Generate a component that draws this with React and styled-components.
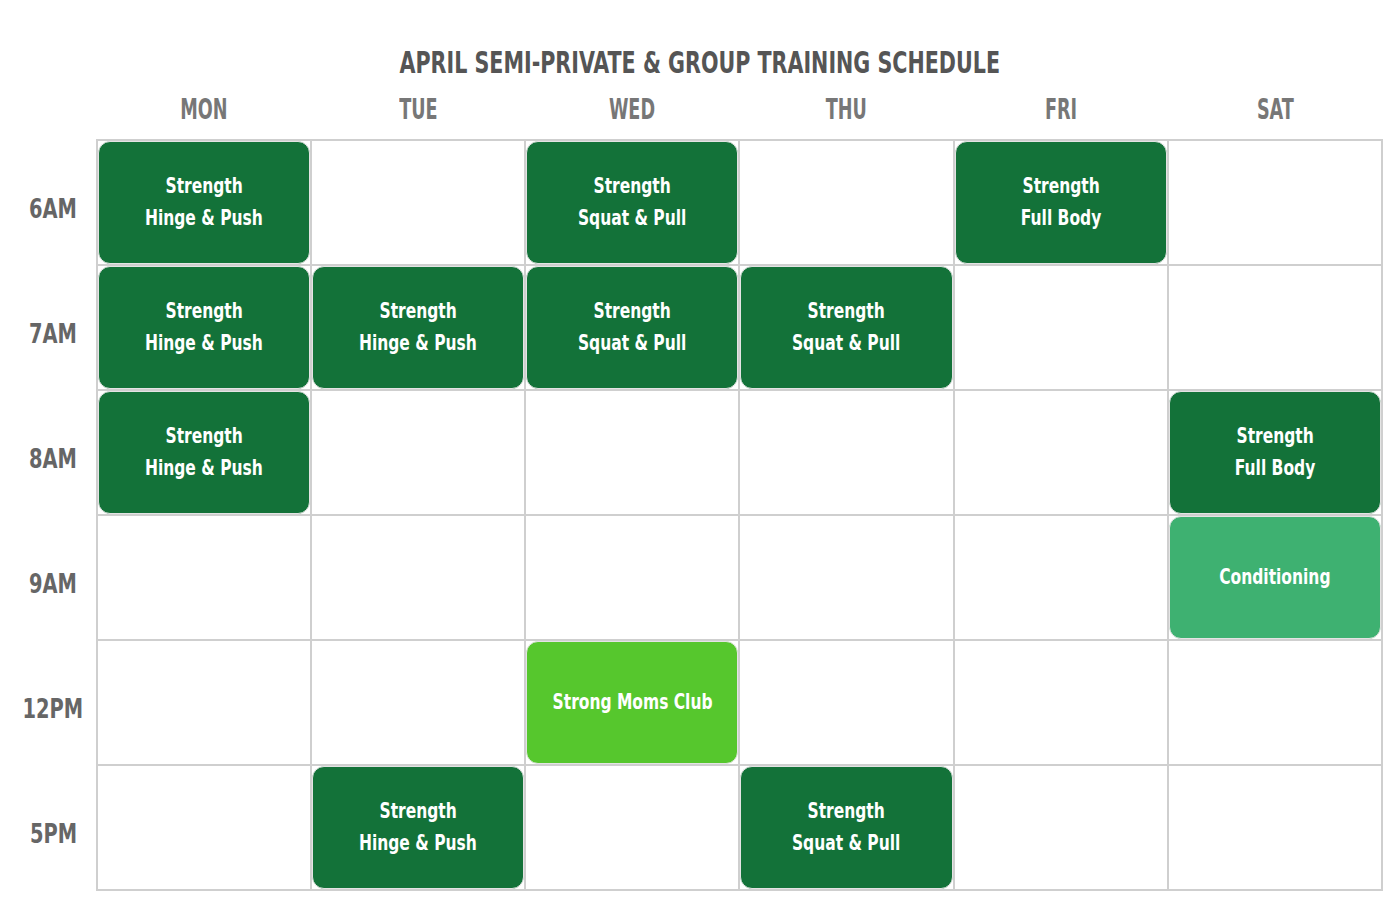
import React from "react";
import styled, { createGlobalStyle } from "styled-components";

const GlobalStyle = createGlobalStyle`
  body {
    margin: 0;
    background: #fff;
    font-family: "DejaVu Sans Condensed", "DejaVu Sans", sans-serif;
  }
`;

const Page = styled.div`
  width: 1400px;
  height: 900px;
  padding-top: 44px;
  box-sizing: border-box;
`;

const Title = styled.h1`
  margin: 0;
  text-align: center;
  color: #555;
  font-size: 31px;
  line-height: 36px;
  font-weight: 700;
`;

// the reference face is much narrower than any installed font
const Narrow = styled.span`
  display: inline-block;
  white-space: nowrap;
  transform: scaleX(${p => p.sx || 0.8});
  transform-origin: center;
`;

const TableC = styled.table`
  width: 1383px;
  border-collapse: collapse;
  table-layout: fixed;
  margin-top: 9px;
`;

const DayTh = styled.th`
  height: 40px;
  padding: 0 0 10px;
  vertical-align: middle;
  text-align: center;
  color: #777;
  font-size: 28px;
  font-weight: 700;
`;

const TimeTd = styled.td`
  width: 97px;
  padding: 12px 0 0 10px;
  text-align: center;
  color: #666;
  font-size: 27px;
  font-weight: 700;
`;

const CellTd = styled.td`
  height: 123px;
  padding: 0;
  border: 2px solid #cfcfcf;
  vertical-align: top;
`;

const colors = {
  strength: "#137239",
  moms: "#56c72d",
  cond: "#3eb171"
};

const Event = styled.div`
  height: 123px;
  border-radius: 12px;
  box-sizing: border-box;
  border: 1px solid #e4e4e4;
  background: ${p => colors[p.kind]};
  color: #fff;
  display: flex;
  flex-direction: column;
  align-items: center;
  justify-content: center;
  padding-bottom: 2px;
  font-size: 21px;
  font-weight: 700;
  line-height: 32px;
`;

const days = ["MON", "TUE", "WED", "THU", "FRI", "SAT"];

const hp = { kind: "strength", lines: ["Strength", "Hinge & Push"] };
const sp = { kind: "strength", lines: ["Strength", "Squat & Pull"] };
const fb = { kind: "strength", lines: ["Strength", "Full Body"] };
const moms = { kind: "moms", lines: ["Strong Moms Club"] };
const cond = { kind: "cond", lines: ["Conditioning"] };

const rows = [
  { time: "6AM", cells: [hp, null, sp, null, fb, null] },
  { time: "7AM", cells: [hp, hp, sp, sp, null, null] },
  { time: "8AM", cells: [hp, null, null, null, null, fb] },
  { time: "9AM", cells: [null, null, null, null, null, cond] },
  { time: "12PM", cells: [null, null, moms, null, null, null] },
  { time: "5PM", cells: [null, hp, null, sp, null, null] }
];

export default function App() {
  return (
    <Page>
      <GlobalStyle />
      <Title>
        <Narrow sx={0.74}>APRIL SEMI-PRIVATE &amp; GROUP TRAINING SCHEDULE</Narrow>
      </Title>
      <TableC>
        <colgroup>
          <col style={{ width: 97 }} />
        </colgroup>
        <thead>
          <tr>
            <th />
            {days.map(d => (
              <DayTh key={d}>
                <Narrow sx={0.7}>{d}</Narrow>
              </DayTh>
            ))}
          </tr>
        </thead>
        <tbody>
          {rows.map(r => (
            <tr key={r.time}>
              <TimeTd>
                <Narrow sx={0.8}>{r.time}</Narrow>
              </TimeTd>
              {r.cells.map((c, i) => (
                <CellTd key={i}>
                  {c ? (
                    <Event kind={c.kind}>
                      {c.lines.map(l => (
                        <Narrow key={l} sx={0.82}>
                          {l}
                        </Narrow>
                      ))}
                    </Event>
                  ) : null}
                </CellTd>
              ))}
            </tr>
          ))}
        </tbody>
      </TableC>
    </Page>
  );
}
